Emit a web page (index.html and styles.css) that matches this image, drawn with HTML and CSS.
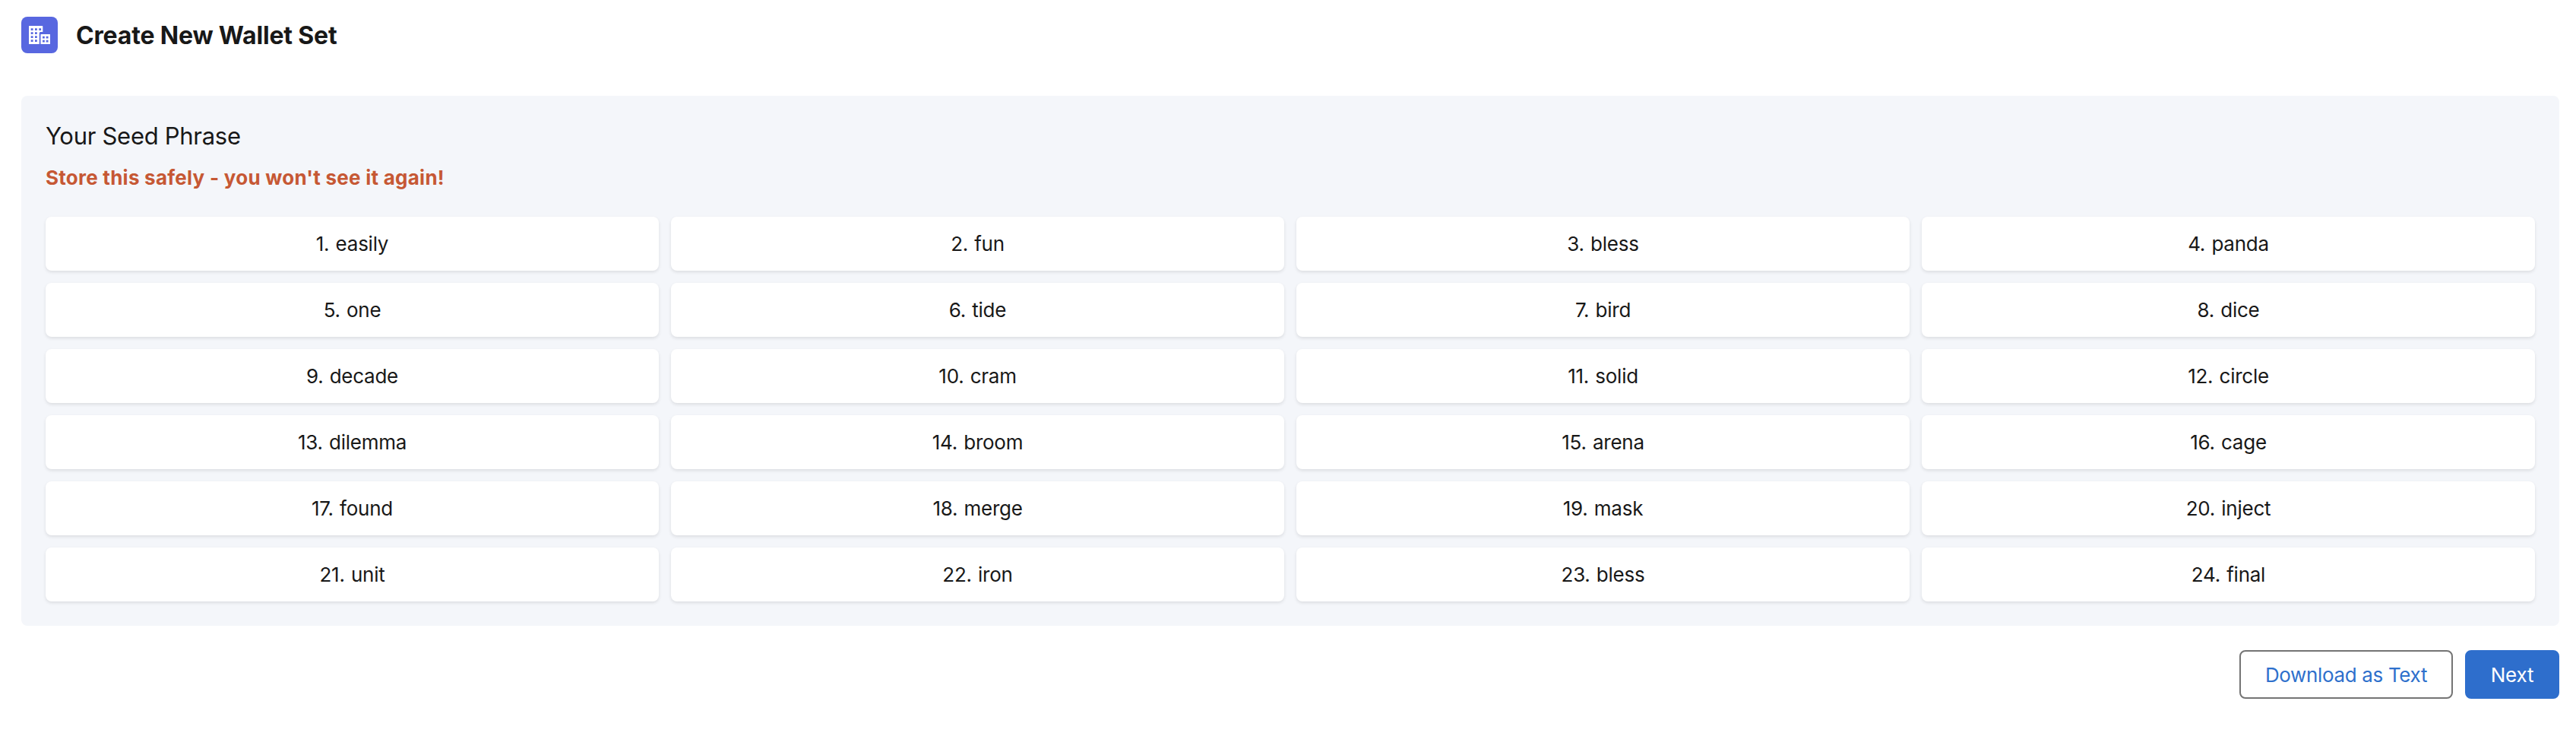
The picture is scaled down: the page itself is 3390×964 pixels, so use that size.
FILE: index.html
```html
<!DOCTYPE html>
<html lang="en">
<head>
<meta charset="utf-8">
<title>Create New Wallet Set</title>
<link rel="stylesheet" href="styles.css">
</head>
<body>
<header class="header">
  <span class="header-icon">
    <svg width="48" height="48" viewBox="0 0 48 48" aria-hidden="true">
      <path fill="#fff" fill-rule="evenodd" d="M10.5 12H27.5Q28.3 12 28.3 12.8V20H25.2Q23.7 20 23.7 21.500V36H10.500Q10 36 10 35.500V12.500Q10 12 10.500 12ZM12.700 15.200v2.800h2.800v-2.800ZM18 15.200v2.800h2.800v-2.800ZM23.300 15.200v2.800h2.800v-2.800ZM12.700 20.200v2.800h2.800v-2.800ZM18 20.200v2.800h2.800v-2.800ZM12.700 25.200v2.800h2.800v-2.800ZM18 25.200v2.800h2.800v-2.800ZM12.700 30.200v2.800h2.800v-2.800ZM18 30.200v2.800h2.800v-2.800Z"/>
      <path fill="#fff" fill-rule="evenodd" d="M26 23H37.500Q38 23 38 23.500V35.500Q38 36 37.500 36H26Q25.500 36 25.500 35.500V23.500Q25.500 23 26 23ZM28 25.800v2.800h2.800v-2.800ZM32.700 25.800v2.800h2.800v-2.800ZM28 30.800v2.800h2.800v-2.800ZM32.700 30.800v2.800h2.800v-2.800Z"/>
    </svg>
  </span>
  <h1 class="title">Create New Wallet Set</h1>
</header>
<main class="panel">
  <h2 class="panel-title">Your Seed Phrase</h2>
  <p class="warning">Store this safely - you won't see it again!</p>
  <div class="words">
    <div class="word">1. easily</div><div class="word">2. fun</div><div class="word">3. bless</div><div class="word">4. panda</div>
    <div class="word">5. one</div><div class="word">6. tide</div><div class="word">7. bird</div><div class="word">8. dice</div>
    <div class="word">9. decade</div><div class="word">10. cram</div><div class="word">11. solid</div><div class="word">12. circle</div>
    <div class="word">13. dilemma</div><div class="word">14. broom</div><div class="word">15. arena</div><div class="word">16. cage</div>
    <div class="word">17. found</div><div class="word">18. merge</div><div class="word">19. mask</div><div class="word">20. inject</div>
    <div class="word">21. unit</div><div class="word">22. iron</div><div class="word">23. bless</div><div class="word">24. final</div>
  </div>
</main>
<footer class="actions">
  <button class="button button-outline">Download as Text</button>
  <button class="button button-brand">Next</button>
</footer>
</body>
</html>
```
FILE: styles.css
```css
* { box-sizing: border-box; }
body {
  margin: 0;
  padding: 22px 22px 0 28px;
  background: #fff;
  color: #181818;
  font: 400 26px/39px Inter, "Liberation Sans", sans-serif;
}
.header { display: flex; align-items: center; gap: 24px; height: 48px; }
.header-icon { display: flex; width: 48px; height: 48px; border-radius: 8px; background: #5867e0; }
.title { margin: 0; padding-top: 1px; font-size: 32px; line-height: 48px; font-weight: 700; letter-spacing: -0.17px; }
.panel { margin-top: 56px; padding: 32px; border-radius: 8px; background: #f4f6fa; }
.panel-title { margin: 0; font-size: 31px; line-height: 41px; font-weight: 400; letter-spacing: -0.29px; }
.warning { margin: 15px 0 32px; color: #c65834; font-weight: 700; letter-spacing: 0.25px; }
.words { display: grid; grid-template-columns: repeat(4, 1fr); gap: 16px; }
.word {
  padding: 16px;
  border-radius: 8px;
  background: #fff;
  box-shadow: 0 2px 4px rgba(0, 0, 0, 0.1);
  text-align: center;
  letter-spacing: -0.25px;
  word-spacing: 1.2px;
}
.actions { display: flex; justify-content: flex-end; gap: 16px; margin-top: 32px; }
.button { height: 64px; padding: 1px 0 0; border-radius: 8px; font: inherit; line-height: 60px; }
.button-outline { width: 281px; border: 2px solid #747474; background: #fff; color: #2e70cc; letter-spacing: -0.34px; }
.button-brand { width: 124px; border: 2px solid #2e6ecc; background: #2e6ecc; color: #fff; letter-spacing: -0.2px; }
```
